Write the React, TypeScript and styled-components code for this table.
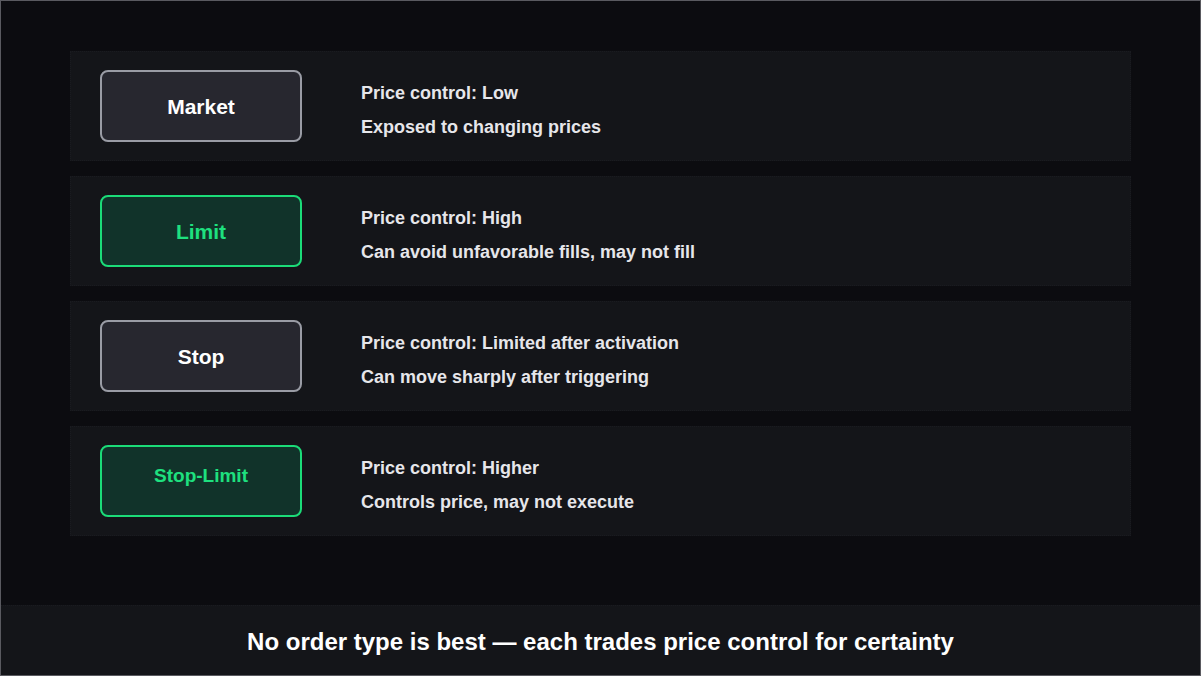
import React from "react";
import styled, { createGlobalStyle } from "styled-components";

const Global = createGlobalStyle`
  html, body { margin: 0; padding: 0; background: #0c0c10; }
  body { font-family: "Liberation Sans", Arial, sans-serif; }
  * { box-sizing: border-box; }
`;

const Frame = styled.div`
  width: 1201px;
  height: 676px;
  border: 1px solid #5a5a60;
  background: #0c0c10;
  display: flex;
  flex-direction: column;
  overflow: hidden;
`;

const List = styled.div`
  flex: 1;
  display: flex;
  flex-direction: column;
  gap: 15px;
  padding: 50px 69px 0 69px;
`;

const Row = styled.div`
  height: 110px;
  background: #141519;
  border: 1px dotted #1a1b20;
  display: flex;
  align-items: center;
  padding-left: 29px;
`;

const Tag = styled.div<{ $accent: boolean; $raised?: boolean }>`
  width: 202px;
  height: 72px;
  border-radius: 8px;
  border: 2px solid ${(p) => (p.$accent ? "#1bdc78" : "#9a9ca5")};
  background: ${(p) => (p.$accent ? "#11332a" : "#27272f")};
  color: ${(p) => (p.$accent ? "#1ee07f" : "#ffffff")};
  display: flex;
  align-items: center;
  justify-content: center;
  font-weight: 700;
  font-size: ${(p) => (p.$raised ? "19px" : "21px")};
  padding-top: ${(p) => (p.$raised ? "0" : "2px")};
  padding-bottom: ${(p) => (p.$raised ? "10px" : "0")};
  flex-shrink: 0;
`;

const Info = styled.div`
  margin-left: 59px;
  display: flex;
  flex-direction: column;
  gap: 14px;
  padding-top: 7px;
`;

const Line = styled.div`
  color: #e6e6ea;
  font-size: 18px;
  font-weight: 700;
  line-height: 20px;
`;

const Footer = styled.div`
  height: 70px;
  background: #141519;
  border-top: 1px dotted #1a1b20;
  display: flex;
  align-items: center;
  justify-content: center;
  padding-top: 2px;
  color: #ffffff;
  font-size: 24px;
  font-weight: 700;
`;

const rows = [
  { name: "Market", accent: false, a: "Price control: Low", b: "Exposed to changing prices" },
  { name: "Limit", accent: true, a: "Price control: High", b: "Can avoid unfavorable fills, may not fill" },
  { name: "Stop", accent: false, a: "Price control: Limited after activation", b: "Can move sharply after triggering" },
  { name: "Stop-Limit", accent: true, raised: true, a: "Price control: Higher", b: "Controls price, may not execute" },
];

export default function App() {
  return (
    <>
      <Global />
      <Frame>
        <List>
          {rows.map((r) => (
            <Row key={r.name}>
              <Tag $accent={r.accent} $raised={r.raised}>{r.name}</Tag>
              <Info>
                <Line>{r.a}</Line>
                <Line>{r.b}</Line>
              </Info>
            </Row>
          ))}
        </List>
        <Footer>No order type is best — each trades price control for certainty</Footer>
      </Frame>
    </>
  );
}
